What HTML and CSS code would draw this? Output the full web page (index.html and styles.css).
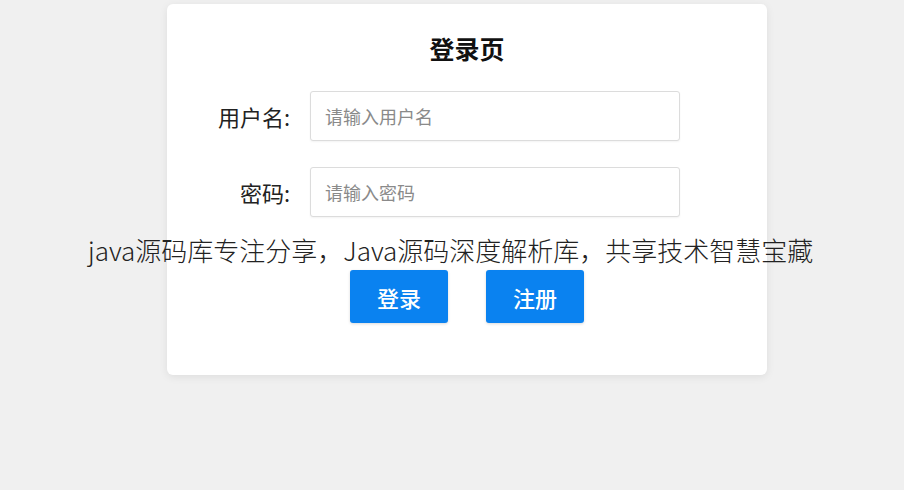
FILE: index.html
```html
<!DOCTYPE html>
<html lang="zh-CN">
<head>
    <meta charset="UTF-8">
    <meta name="viewport" content="width=device-width, initial-scale=1.0">
    <title>登录页</title>
    <link rel="stylesheet" href="styles.css">
</head>
<body>
    <div class="container">
        <h1>登录页</h1>
        <div class="form">
            <div class="row">
                <label for="username">用户名:</label>
                <input type="text" id="username" placeholder="请输入用户名">
            </div>
            <div class="row">
                <label for="password">密码:</label>
                <input type="password" id="password" placeholder="请输入密码">
            </div>
        </div>
        <div class="buttons">
            <button class="btn">登录</button>
            <button class="btn">注册</button>
        </div>
    </div>
    <div class="caption">java源码库专注分享，Java源码深度解析库，共享技术智慧宝藏</div>
</body>
</html>
```
FILE: styles.css
```css
body {
    font-family: "Noto Sans CJK SC", "Noto Sans", sans-serif;
    background-color: #f0f0f0;
    margin: 0;
    padding: 0;
    height: 490px;
    position: relative;
    overflow: hidden;
}
.container {
    background-color: #fff;
    margin: 4px 0 0 167px;
    width: 600px;
    height: 371px;
    padding-top: 28px;
    border-radius: 6px;
    box-shadow: 0 2px 8px rgba(0, 0, 0, 0.08);
    box-sizing: border-box;
}
h1 {
    text-align: center;
    margin: 0;
    font-size: 25px;
    line-height: 32px;
    font-weight: bold;
    color: #111;
}
.form {
    margin-top: 27px;
    display: flex;
    flex-direction: column;
    gap: 26px;
}
.row {
    display: flex;
    align-items: center;
    gap: 20px;
}
label {
    width: 123px;
    text-align: right;
    font-size: 22px;
    color: #222;
}
input {
    width: 370px;
    height: 50px;
    padding: 0 14px;
    border: 1px solid #dcdcdc;
    border-radius: 3px;
    box-sizing: border-box;
    font-family: inherit;
    font-size: 18px;
    box-shadow: 0 1px 2px rgba(0, 0, 0, 0.05);
}
input::placeholder {
    color: #8a8a8a;
}
.buttons {
    margin-top: 53px;
    display: flex;
    justify-content: center;
    gap: 38px;
}
.btn {
    width: 98px;
    height: 53px;
    background-color: #0a82f0;
    color: #fff;
    border: none;
    border-radius: 3px;
    font-family: inherit;
    font-size: 22px;
    font-weight: 500;
    cursor: pointer;
    box-shadow: 0 1px 3px rgba(0, 0, 0, 0.15);
}
.caption {
    position: absolute;
    left: 88px;
    top: 231px;
    font-size: 26px;
    line-height: 38px;
    font-weight: 300;
    color: #222;
    white-space: nowrap;
}
```
